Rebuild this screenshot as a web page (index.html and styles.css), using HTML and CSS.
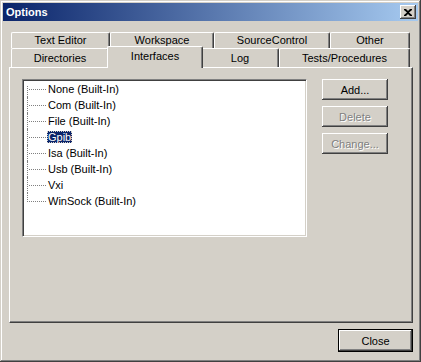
FILE: index.html
```html
<!doctype html>
<html lang="en">
  <head>
    <meta charset="UTF-8" />
    <title>Options</title>
    <link rel="stylesheet" href="styles.css">
  </head>
  <body>
    <div class="window">
      <div class="titlebar">
        <span class="title">Options</span>
        <button class="title-close" aria-label="Close">
          <svg width="8" height="7" viewBox="0 0 8 7">
            <path d="M0 0h2l2 2 2-2h2v1L5 3.5 8 6v1H6L4 5 2 7H0V6l3-2.5L0 1z" fill="#000"/>
          </svg>
        </button>
      </div>

      <div class="content">
        <div class="tabs">
          <div class="tab-row back">
            <div class="tab w-texted">Text Editor</div>
            <div class="tab w-workspace">Workspace</div>
            <div class="tab w-source">SourceControl</div>
            <div class="tab w-other">Other</div>
          </div>
          <div class="tab-row front">
            <div class="tab w-dirs">Directories</div>
            <div class="tab w-ifaces selected">Interfaces</div>
            <div class="tab w-log">Log</div>
            <div class="tab w-tests">Tests/Procedures</div>
          </div>
        </div>

        <div class="panel">
          <div class="listbox">
            <ul class="tree">
              <li><span>None (Built-In)</span></li>
              <li><span>Com (Built-In)</span></li>
              <li><span>File (Built-In)</span></li>
              <li><span class="sel">Gpib</span></li>
              <li><span>Isa (Built-In)</span></li>
              <li><span>Usb (Built-In)</span></li>
              <li><span>Vxi</span></li>
              <li><span>WinSock (Built-In)</span></li>
            </ul>
          </div>
          <div class="side-buttons">
            <button class="btn">Add...</button>
            <button class="btn" disabled>Delete</button>
            <button class="btn" disabled>Change...</button>
          </div>
        </div>

        <div class="footer">
          <button class="btn default">Close</button>
        </div>
      </div>
    </div>
  </body>
</html>
```

FILE: styles.css
```css
body {
  margin: 0;
  background-color: #d4d0c8;
  font-family: "Liberation Sans", Arial, sans-serif;
  font-size: 11px;
  color: #000;
}
.window {
  box-sizing: border-box;
  width: 421px;
  height: 362px;
  padding: 3px;
  background-color: #d4d0c8;
  box-shadow: inset -1px -1px #404040, inset 1px 1px #d4d0c8,
    inset -2px -2px #808080, inset 2px 2px #ffffff;
}
.titlebar {
  height: 18px;
  display: flex;
  align-items: center;
  justify-content: space-between;
  padding: 0 2px 0 2px;
  background: linear-gradient(to right, #0a246a, #a6caf0);
}
.title {
  color: #fff;
  font-weight: bold;
  font-size: 11px;
  padding-left: 1px;
}
.title-close {
  box-sizing: border-box;
  width: 16px;
  height: 14px;
  padding: 0;
  border: none;
  background-color: #d4d0c8;
  display: flex;
  align-items: center;
  justify-content: center;
  box-shadow: inset -1px -1px #404040, inset 1px 1px #ffffff,
    inset -2px -2px #808080;
}
.content {
  padding: 11px 5px 0 6px;
}
.tabs {
  margin-left: 2px;
}
.tab-row {
  display: flex;
}
.tab-row.back {
  height: 16px;
}
.tab-row.front {
  height: 19px;
}
.tab {
  box-sizing: border-box;
  height: 100%;
  border-top: 1px solid #fff;
  border-left: 1px solid #fff;
  border-right: 1px solid #404040;
  border-radius: 2px 2px 0 0;
  box-shadow: inset -1px 0 #808080;
  text-align: center;
  line-height: 15px;
  background-color: #d4d0c8;
}
.tab-row.front .tab {
  padding-top: 1px;
  line-height: 16px;
}
.tab.selected {
  position: relative;
  z-index: 1;
  margin: -2px -2px -1px;
  height: 22px;
  padding-top: 0;
}
.w-texted { width: 99px; }
.w-workspace { width: 104px; }
.w-source { width: 116px; }
.w-other { width: 80px; }
.w-dirs { width: 98px; }
.w-ifaces { width: 96px; }
.w-log { width: 78px; }
.w-tests { width: 131px; }

.panel {
  box-sizing: border-box;
  width: 404px;
  height: 256px;
  display: flex;
  align-items: flex-start;
  padding: 11px 0 0 12px;
  border-top: 1px solid #fff;
  border-left: 1px solid #fff;
  border-right: 1px solid #404040;
  border-bottom: 1px solid #404040;
  box-shadow: inset -1px -1px #808080;
}
.listbox {
  box-sizing: border-box;
  width: 285px;
  height: 158px;
  background-color: #fff;
  border-top: 1px solid #808080;
  border-left: 1px solid #808080;
  border-right: 1px solid #fff;
  border-bottom: 1px solid #fff;
  box-shadow: inset 1px 1px #404040, inset -1px -1px #d4d0c8;
  padding: 1px;
}
.tree {
  list-style: none;
  margin: 0;
  padding: 0;
}
.tree li {
  position: relative;
  height: 16px;
  line-height: 16px;
  padding-left: 23px;
}
.tree li::before {
  content: "";
  position: absolute;
  left: 3px;
  top: 0;
  height: 16px;
  border-left: 1px dotted #808080;
}
.tree li:first-child::before {
  top: 5px;
  height: 11px;
}
.tree li:last-child::before {
  height: 9px;
}
.tree li::after {
  content: "";
  position: absolute;
  left: 5px;
  top: 8px;
  width: 17px;
  border-top: 1px dotted #808080;
}
.tree span {
  padding: 0 1px;
}
.tree .sel {
  background-color: #0a246a;
  color: #fff;
  outline: 1px dotted #d4d0c8;
  outline-offset: -1px;
}
.side-buttons {
  display: flex;
  flex-direction: column;
  gap: 6px;
  margin-left: 15px;
}
.btn {
  box-sizing: border-box;
  width: 66px;
  height: 21px;
  padding: 0;
  border: none;
  background-color: #d4d0c8;
  font-family: "Liberation Sans", Arial, sans-serif;
  font-size: 11px;
  color: #000;
  box-shadow: inset -1px -1px #404040, inset 1px 1px #ffffff,
    inset -2px -2px #808080;
}
.btn:disabled {
  color: #808080;
  text-shadow: 1px 1px #fff;
}
.footer {
  display: flex;
  justify-content: flex-end;
  padding-top: 6px;
}
.btn.default {
  width: 75px;
  height: 23px;
  border: 1px solid #000;
}
```
